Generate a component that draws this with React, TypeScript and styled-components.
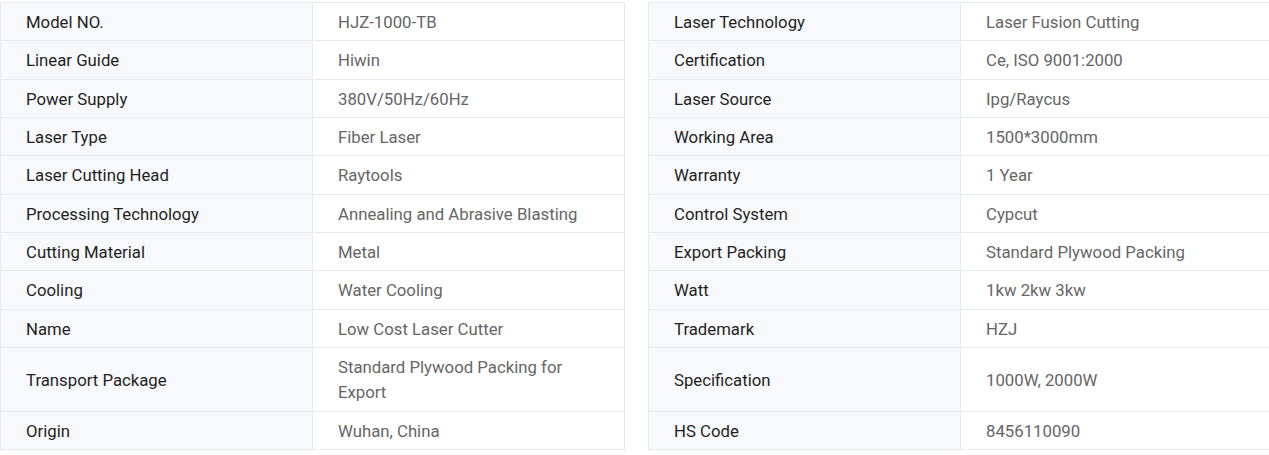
import React from "react";
import styled, { createGlobalStyle } from "styled-components";

const GlobalStyle = createGlobalStyle`
  html, body {
    margin: 0;
    padding: 0;
    background: #ffffff;
    overflow: hidden;
  }
  body {
    font-family: Roboto, "Liberation Sans", Arial, sans-serif;
  }
`;

const Page = styled.div`
  width: 1269px;
  padding-top: 2px;
`;

const Table = styled.table`
  width: 100%;
  table-layout: fixed;
  border-collapse: collapse;
  font-size: 16.75px;
  line-height: 25.33px;
`;

const Col = styled.col<{ $w?: number }>`
  width: ${(p) => (p.$w ? `${p.$w}px` : "auto")};
`;

const Row = styled.tr``;

const Cell = styled.td<{ $label?: boolean; $open?: boolean }>`
  box-sizing: border-box;
  padding: 7px 25px 5px;
  border: 1px solid #e6ebf3;
  ${(p) => (p.$open ? "border-right: none;" : "")}
  vertical-align: middle;
  text-align: left;
  background: ${(p) => (p.$label ? "#f7f9fc" : "#ffffff")};
  color: ${(p) => (p.$label ? "#1f1f1f" : "#666666")};
`;

const Gap = styled.td`
  padding: 0;
  background: #ffffff;
  border-top: hidden;
  border-bottom: hidden;
`;

type Pair = [string, string];

const left: Pair[] = [
  ["Model NO.", "HJZ-1000-TB"],
  ["Linear Guide", "Hiwin"],
  ["Power Supply", "380V/50Hz/60Hz"],
  ["Laser Type", "Fiber Laser"],
  ["Laser Cutting Head", "Raytools"],
  ["Processing Technology", "Annealing and Abrasive Blasting"],
  ["Cutting Material", "Metal"],
  ["Cooling", "Water Cooling"],
  ["Name", "Low Cost Laser Cutter"],
  ["Transport Package", "Standard Plywood Packing for Export"],
  ["Origin", "Wuhan, China"],
];

const right: Pair[] = [
  ["Laser Technology", "Laser Fusion Cutting"],
  ["Certification", "Ce, ISO 9001:2000"],
  ["Laser Source", "Ipg/Raycus"],
  ["Working Area", "1500*3000mm"],
  ["Warranty", "1 Year"],
  ["Control System", "Cypcut"],
  ["Export Packing", "Standard Plywood Packing"],
  ["Watt", "1kw 2kw 3kw"],
  ["Trademark", "HZJ"],
  ["Specification", "1000W, 2000W"],
  ["HS Code", "8456110090"],
];

export default function App() {
  return (
    <>
      <GlobalStyle />
      <Page>
        <Table>
          <colgroup>
            <Col $w={312} />
            <Col $w={312} />
            <Col $w={24} />
            <Col $w={312} />
            <Col />
          </colgroup>
          <tbody>
            {left.map(([k, v], i) => (
              <Row key={k}>
                <Cell $label>{k}</Cell>
                <Cell>{v}</Cell>
                <Gap />
                <Cell $label>{right[i][0]}</Cell>
                <Cell $open>{right[i][1]}</Cell>
              </Row>
            ))}
          </tbody>
        </Table>
      </Page>
    </>
  );
}
